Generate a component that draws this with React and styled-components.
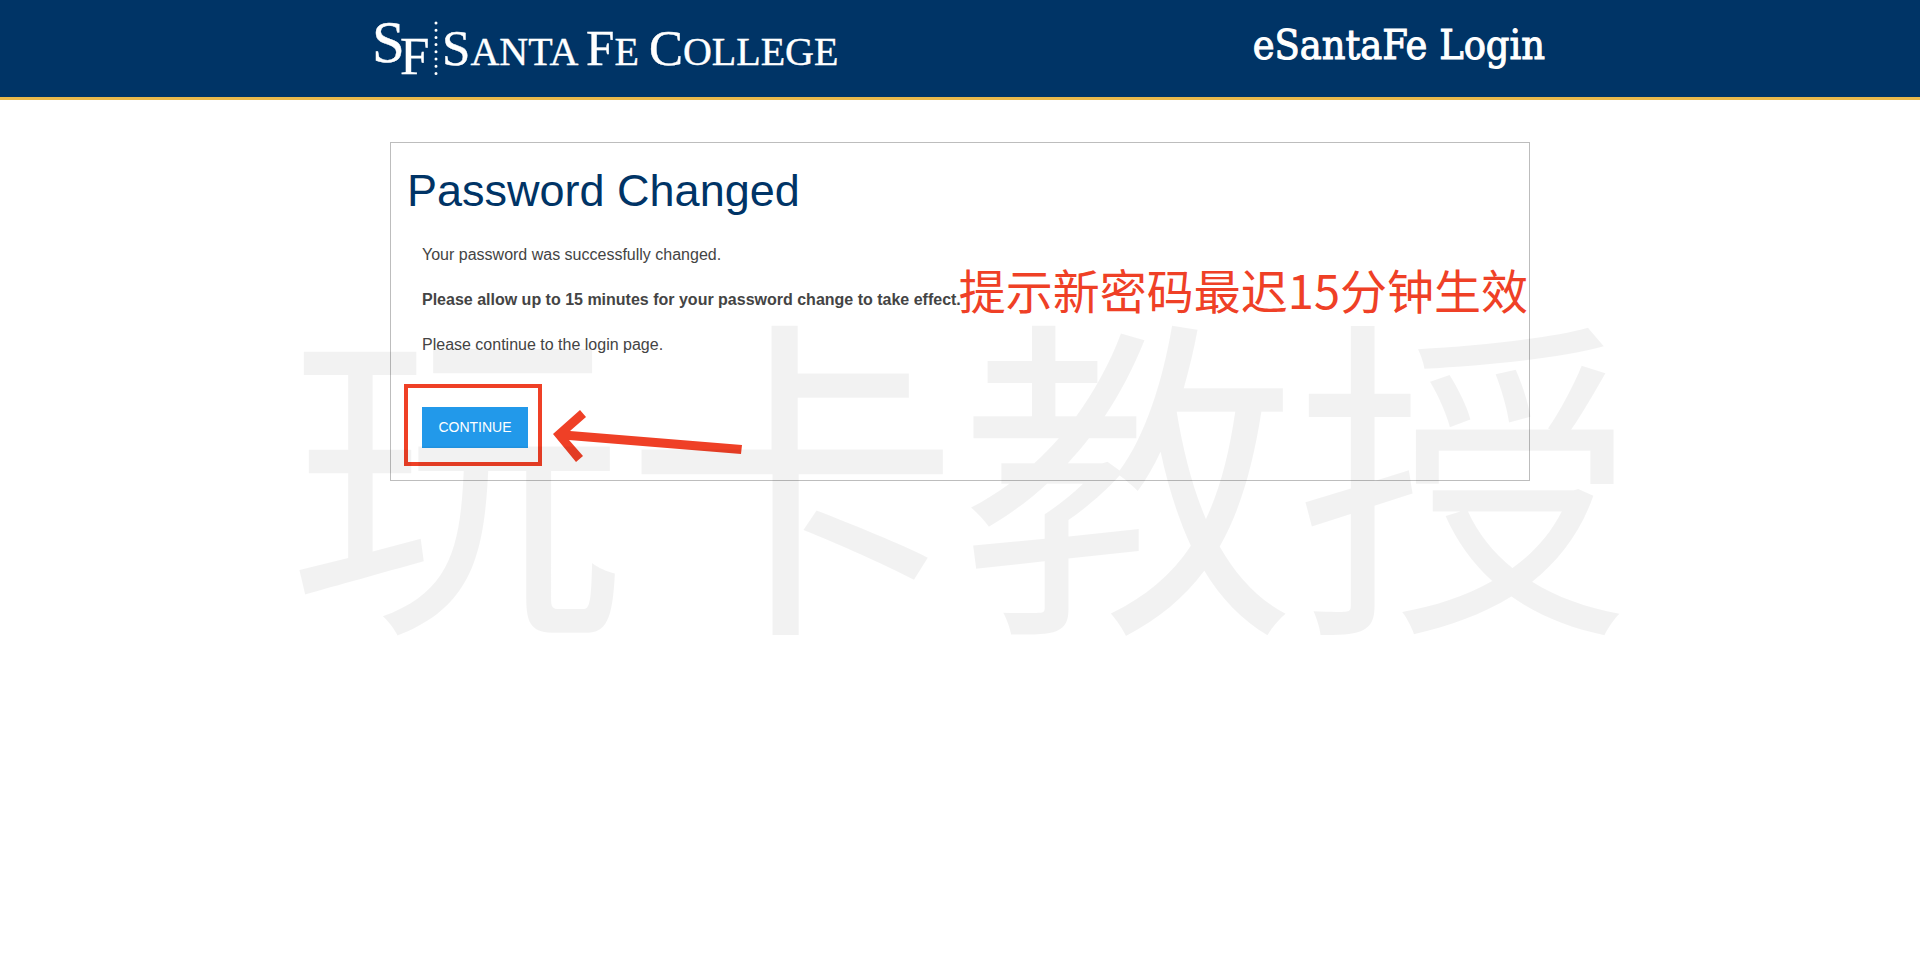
import styled, { createGlobalStyle } from 'styled-components'

function App() {
  return (
    <>
      <GlobalStyle />
      <Page>
        <Header>
          <HeaderInner>
            <LogoLink href='/' aria-label='Santa Fe College'>
              <Logo />
            </LogoLink>
            <SiteTitle>eSantaFe Login</SiteTitle>
          </HeaderInner>
        </Header>
        <Main>
          <Panel>
            <Title>Password Changed</Title>
            <Message>
              <p>Your password was successfully changed.</p>
              <Notice>
                <strong>Please allow up to 15 minutes for your password change to take effect.</strong>
                <Annotation lang='zh-CN'>提示新密码最迟15分钟生效</Annotation>
              </Notice>
              <p>Please continue to the login page.</p>
            </Message>
            <Actions>
              <ContinueButton type='button'>CONTINUE</ContinueButton>
              <Highlight />
              <Arrow />
            </Actions>
          </Panel>
        </Main>
        <Watermark lang='zh-CN' aria-hidden='true'>玩卡教授</Watermark>
      </Page>
    </>
  )
}

export default App

function Logo() {
  return (
    <LogoSvg viewBox='0 0 470 64' width='470' height='64'>
      <text x='-3' y='45' fontSize='59'>S</text>
      <text x='25' y='57' fontSize='53'>F</text>
      <line x1='61' y1='6' x2='61' y2='58' />
      <text x='67' y='48' fontSize='40'>
        <tspan fontSize='51'>S</tspan>ANTA <tspan fontSize='51'>F</tspan>E <tspan fontSize='51'>C</tspan>OLLEGE
      </text>
    </LogoSvg>
  )
}

function Arrow() {
  return (
    <ArrowSvg viewBox='0 0 190 54' width='190' height='54' aria-hidden='true'>
      <path d='M0 24 27 0 33 7 17 21 189 35 188 44 16 30 30 46 23 52Z' />
    </ArrowSvg>
  )
}

const GlobalStyle = createGlobalStyle`
  * {
    box-sizing: border-box;
  }
  body {
    margin: 0;
    background: #fff;
    color: #444;
    font-family: 'Liberation Sans', Arial, sans-serif;
    font-size: 16px;
    line-height: 25px;
  }
`

const Page = styled.div`
  position: relative;
  min-height: 100vh;
  overflow: hidden;
`

const Header = styled.header`
  background: #003466;
  border-bottom: 3px solid #e9b94b;
`

const HeaderInner = styled.div`
  display: flex;
  align-items: flex-start;
  justify-content: space-between;
  max-width: 1170px;
  margin: 0 auto;
  padding: 17px 0 16px;
`

const LogoLink = styled.a`
  display: block;
  height: 64px;
`

const LogoSvg = styled.svg`
  display: block;
  overflow: visible;
  fill: #fff;
  font-family: 'Liberation Serif', 'Times New Roman', serif;

  text {
    stroke: #fff;
    stroke-width: 0.4;
  }

  line {
    stroke: #fff;
    stroke-width: 3;
    stroke-linecap: round;
    stroke-dasharray: 0 7.2;
  }
`

const SiteTitle = styled.div`
  color: #fff;
  font-family: 'Roboto Slab', 'DejaVu Serif Condensed', 'DejaVu Serif', serif;
  font-size: 41px;
  line-height: 56px;
  white-space: nowrap;
  -webkit-text-stroke: 1px #fff;
`

const Main = styled.main`
  max-width: 1170px;
  margin: 0 auto;
  padding: 42px 15px;
`

const Panel = styled.section`
  border: 1px solid #bdbdbd;
  padding: 20px 16px 32px;
`

const Title = styled.h1`
  margin: 0;
  color: #003466;
  font-size: 45px;
  font-weight: 400;
  line-height: 56px;
`

const Message = styled.div`
  display: flex;
  flex-direction: column;
  gap: 20px;
  padding: 23px 15px 50px;

  p {
    margin: 0;
  }
`

const Notice = styled.p`
  position: relative;
  align-self: flex-start;
`

const Annotation = styled.span`
  position: absolute;
  left: 100%;
  top: 50%;
  margin: -43px 0 0 -2px;
  color: #ef4026;
  font-family: 'Noto Sans CJK SC', sans-serif;
  font-size: 47px;
  line-height: 64px;
  white-space: nowrap;
`

const Actions = styled.div`
  position: relative;
  display: flex;
  margin-left: 15px;
`

const ContinueButton = styled.button`
  min-width: 106px;
  height: 41px;
  padding: 0 15px 2px;
  border: 0;
  background: #2299ea;
  color: #fff;
  font-family: inherit;
  font-size: 14px;
  cursor: pointer;
`

const Highlight = styled.span`
  position: absolute;
  top: -23px;
  left: -18px;
  width: 138px;
  height: 82px;
  border: 4px solid #ef4026;
  pointer-events: none;
`

const ArrowSvg = styled.svg`
  position: absolute;
  top: 3px;
  left: 131px;
  fill: #ef4026;
`

const Watermark = styled.div`
  position: absolute;
  top: 294px;
  left: 50%;
  transform: translateX(-50%);
  color: rgba(0, 0, 0, 0.05);
  font-family: 'Noto Sans CJK SC', sans-serif;
  font-size: 336px;
  line-height: 336px;
  white-space: nowrap;
  pointer-events: none;
`
